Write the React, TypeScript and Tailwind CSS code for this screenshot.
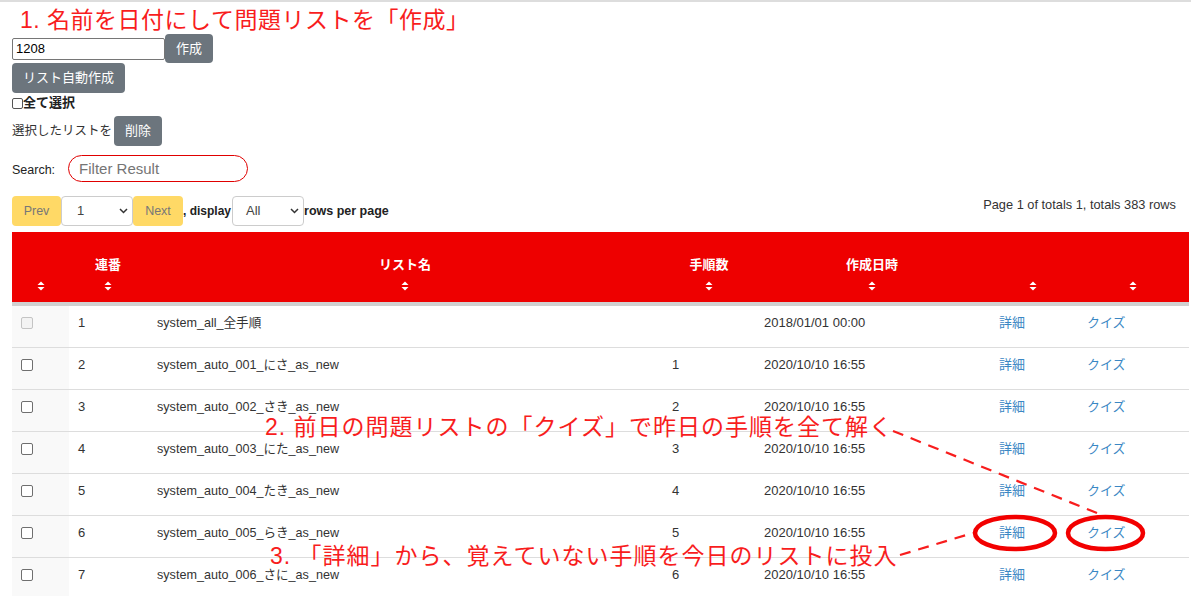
import React from "react";

type Row = { id: number; name: string; count: string; date: string; disabled?: boolean };

const rows: Row[] = [
  { id: 1, name: "system_all_全手順", count: "", date: "2018/01/01 00:00", disabled: true },
  { id: 2, name: "system_auto_001_にさ_as_new", count: "1", date: "2020/10/10 16:55" },
  { id: 3, name: "system_auto_002_さき_as_new", count: "2", date: "2020/10/10 16:55" },
  { id: 4, name: "system_auto_003_にた_as_new", count: "3", date: "2020/10/10 16:55" },
  { id: 5, name: "system_auto_004_たき_as_new", count: "4", date: "2020/10/10 16:55" },
  { id: 6, name: "system_auto_005_らき_as_new", count: "5", date: "2020/10/10 16:55" },
  { id: 7, name: "system_auto_006_さに_as_new", count: "6", date: "2020/10/10 16:55" },
];

function SortIcon() {
  return (
    <svg width="8" height="10" viewBox="0 0 8 10" className="block">
      <path d="M0.5 4 L4 0.6 L7.5 4 Z" fill="white" />
      <path d="M0.5 6 L4 9.4 L7.5 6 Z" fill="white" />
    </svg>
  );
}

function Box({ disabled, size }: { disabled?: boolean; size?: "sm" }) {
  if (size === "sm") {
    return <span className="block w-[11px] h-[11px] rounded-[2px] border border-[#555] bg-white" />;
  }
  return disabled ? (
    <span className="block w-[12px] h-[12px] rounded-[2px] border border-[#c4c4c4] bg-[#f3f3f3]" />
  ) : (
    <span className="block w-[12px] h-[12px] rounded-[2px] border border-[#6f6f6f] bg-white" />
  );
}

function Chevron() {
  return (
    <svg width="9" height="6" viewBox="0 0 9 6" className="block">
      <path d="M1 1 L4.5 4.5 L8 1" fill="none" stroke="#333" strokeWidth="1.5" />
    </svg>
  );
}

const headers = ["", "連番", "リスト名", "手順数", "作成日時", "", ""];

export default function App() {
  return (
    <div className="relative h-[596px] w-[1191px] overflow-hidden bg-white border-t-2 border-[#dddddd] font-['Liberation_Sans','Noto_Sans_CJK_JP',sans-serif] text-[13px] text-[#333]">
      <div className="pl-[12px]">
        <div className="h-[32px] pl-[8px] pt-[5px] text-[23px] leading-[26px] tracking-[0.5px] text-[#f81d1d] whitespace-nowrap">
          1. 名前を日付にして問題リストを「作成」
        </div>

        <div className="flex items-center h-[29px]">
          <div className="w-[153px] h-[22px] border border-[#767676] rounded-[2px] px-[3px] text-[13px] leading-[20px] text-black">
            1208
          </div>
          <div className="h-[29px] px-[11px] rounded-[4px] bg-[#6c757d] text-white text-[13px] leading-[29px]">作成</div>
        </div>

        <div className="flex">
          <div className="h-[30px] px-[11px] rounded-[4px] bg-[#6c757d] text-white text-[13px] leading-[30px]">
            リスト自動作成
          </div>
        </div>

        <div className="mt-[2px] h-[16px] flex items-center">
          <Box size="sm" />
          <span className="font-bold text-[13px] leading-[16px] text-[#222]">全て選択</span>
        </div>

        <div className="mt-[5px] h-[30px] flex items-center">
          <span className="text-[12.5px] text-[#333]">選択したリストを</span>
          <div className="ml-[2px] h-[30px] px-[11px] rounded-[4px] bg-[#6c757d] text-white text-[13px] leading-[30px]">削除</div>
        </div>

        <div className="mt-[9px] h-[27px] flex items-center">
          <span className="text-[12.5px] pt-[3px] text-[#222]">Search:</span>
          <div className="ml-[13px] w-[180px] h-[27px] rounded-full border border-[#e00000] pl-[10px] text-[15px] leading-[25px] text-[#757575]">
            Filter Result
          </div>
        </div>

        <div className="mt-[14px] w-[1177px] flex justify-between">
          <div className="flex items-center h-[30px]">
            <div className="w-[49px] h-[30px] rounded-[4px] bg-[#ffd966] text-[12.5px] text-[#777] flex items-center justify-center">Prev</div>
            <div className="w-[72px] h-[30px] rounded-[4px] border border-[#cccccc] bg-white flex items-center justify-between pl-[15px] pr-[4px] text-[13px] text-[#444]">
              <span>1</span>
              <Chevron />
            </div>
            <div className="w-[50px] h-[30px] rounded-[4px] bg-[#ffd966] text-[12.5px] text-[#777] flex items-center justify-center">Next</div>
            <span className="font-bold text-[12px] text-[#222] whitespace-pre">, display</span>
            <div className="ml-[1px] w-[72px] h-[30px] rounded-[4px] border border-[#cccccc] bg-white flex items-center justify-between pl-[13px] pr-[4px] text-[13px] text-[#444]">
              <span>All</span>
              <Chevron />
            </div>
            <span className="font-bold text-[12.5px] text-[#222]">rows per page</span>
          </div>
          <div className="self-start pr-[13px] text-[12.8px] leading-[18px] text-[#333]">
            Page 1 of totals 1, totals 383 rows
          </div>
        </div>

        <div className="mt-[6px] w-[1177px]">
          <div className="grid grid-cols-[57px_78px_516px_92px_234px_88px_112px] h-[74px] bg-[#ee0000] border-b-4 border-[#d0d0d0]">
            {headers.map((h, i) => (
              <div key={i} className="flex flex-col items-center pt-[25px]">
                <div className="h-[16px] leading-[16px] text-[13px] font-bold text-white whitespace-nowrap">{h}</div>
                <div className="mt-[8px]">
                  <SortIcon />
                </div>
              </div>
            ))}
          </div>
          {rows.map((r) => (
            <div
              key={r.id}
              className="grid grid-cols-[57px_78px_516px_92px_234px_88px_112px] h-[42px] border-b border-[#dddddd] text-[13px] leading-[16px]"
            >
              <div className="bg-[#f9f9f9] pl-[9px] pt-[11px]">
                <Box disabled={r.disabled} />
              </div>
              <div className="pl-[9px] pt-[9px]">{r.id}</div>
              <div className="pl-[10px] pt-[9px] whitespace-nowrap text-[12.6px]">{r.name}</div>
              <div className="pl-[9px] pt-[9px]">{r.count}</div>
              <div className="pl-[9px] pt-[9px]">{r.date}</div>
              <div className="pl-[10px] pt-[9px] text-[#3a87c4]">詳細</div>
              <div className="pl-[10px] pt-[9px] text-[#3a87c4]">クイズ</div>
            </div>
          ))}
        </div>
      </div>

      <div className="absolute left-[265px] top-[412px] text-[23px] leading-[26px] tracking-[1px] text-[#f81d1d] whitespace-nowrap">
        2. 前日の問題リストの「クイズ」で昨日の手順を全て解く
      </div>
      <div className="absolute left-[270px] top-[541px] text-[23px] leading-[26px] tracking-[1px] text-[#f81d1d] whitespace-nowrap">
        3. 「詳細」から、覚えていない手順を今日のリストに投入
      </div>

      <svg className="absolute left-0 top-0 pointer-events-none" width="1191" height="596" viewBox="0 0 1191 596">
        <line x1="893" y1="429" x2="1097" y2="511" stroke="#f81d1d" strokeWidth="2.2" strokeDasharray="11 8" />
        <line x1="900" y1="553" x2="973" y2="531" stroke="#f81d1d" strokeWidth="2.2" strokeDasharray="11 8" />
        <ellipse cx="1015" cy="531" rx="40" ry="16" fill="none" stroke="#f20000" strokeWidth="4.5" />
        <ellipse cx="1105.5" cy="531" rx="37.5" ry="16" fill="none" stroke="#f20000" strokeWidth="4.5" />
      </svg>
    </div>
  );
}
